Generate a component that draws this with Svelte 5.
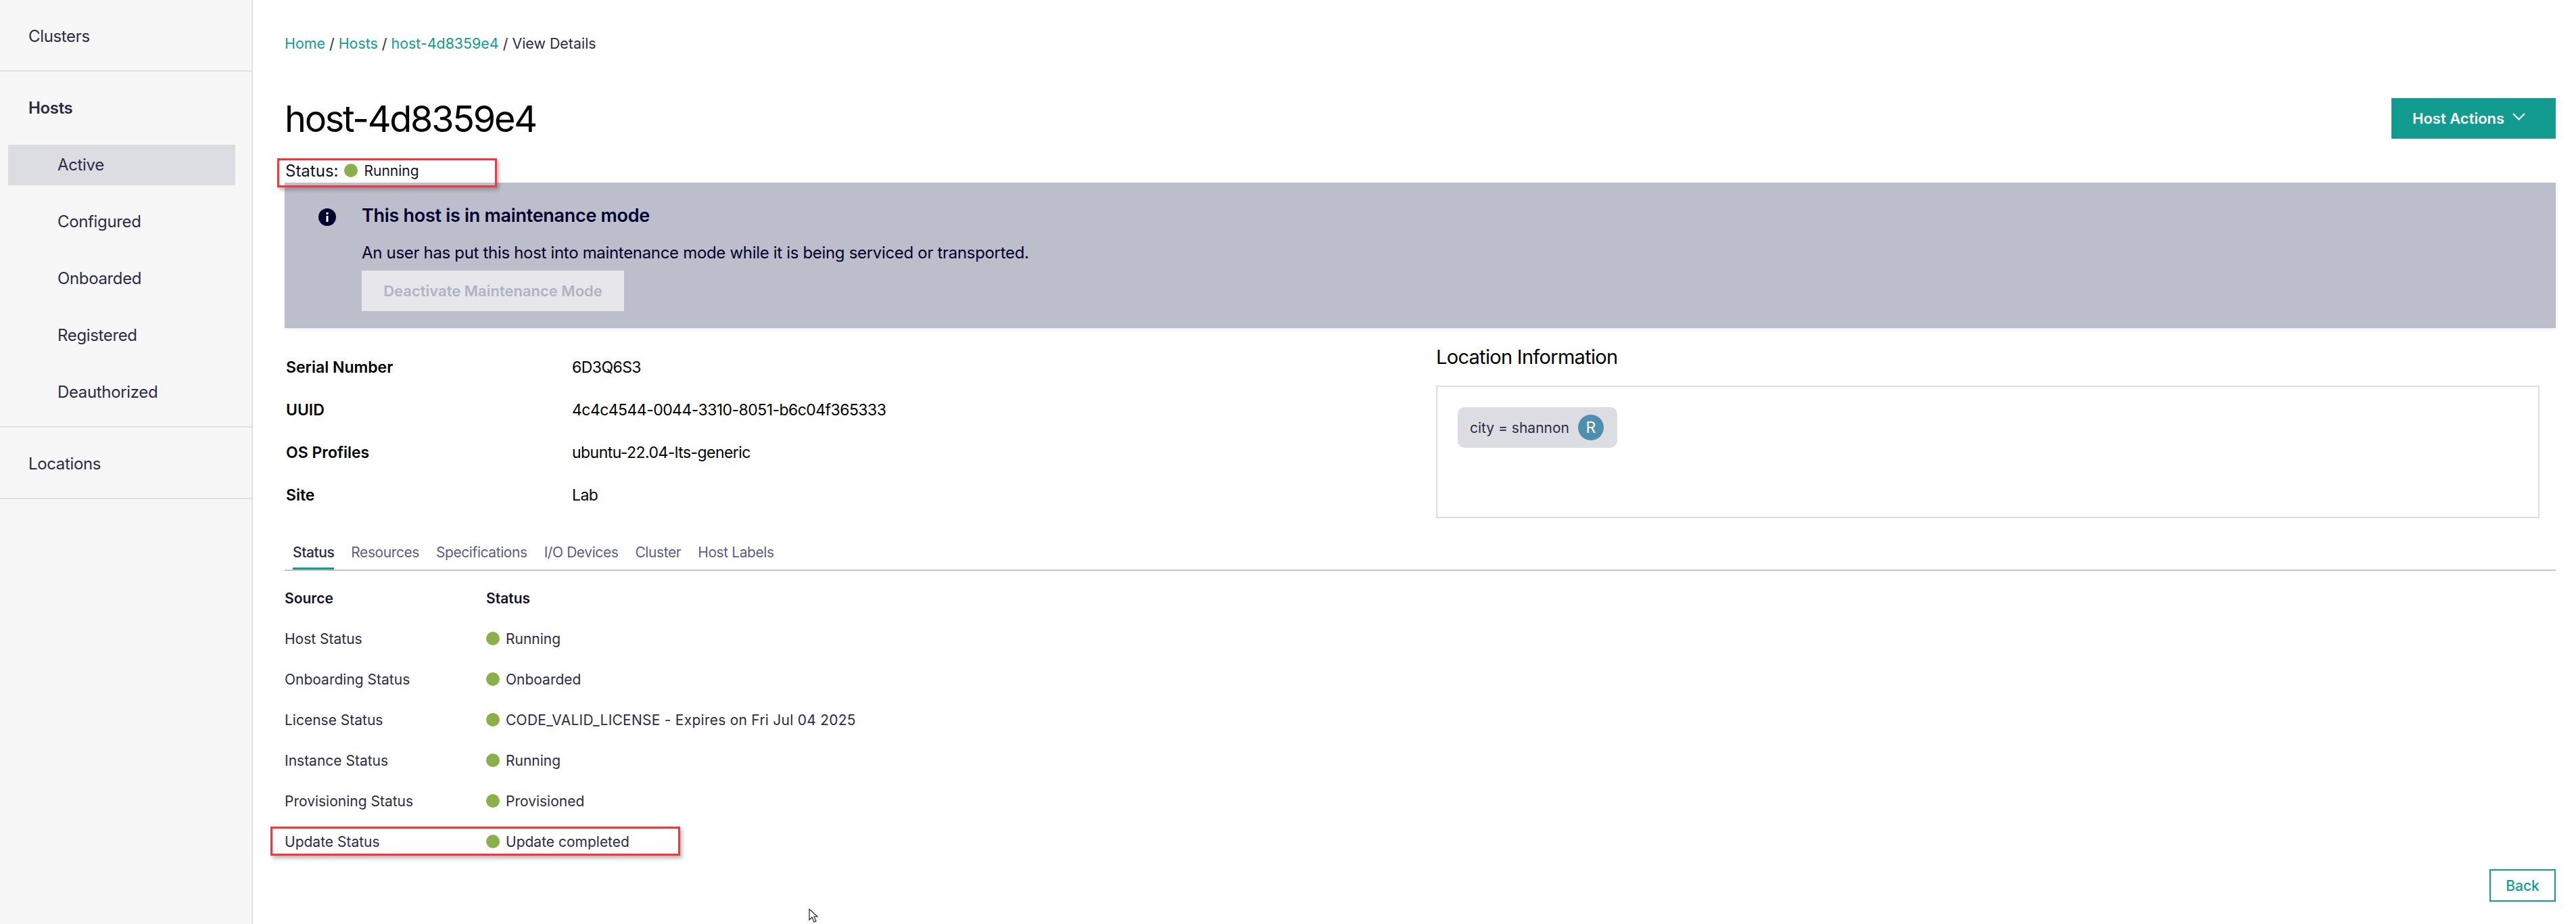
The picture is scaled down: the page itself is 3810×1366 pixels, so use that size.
<script>
  const subItems = ['Active', 'Configured', 'Onboarded', 'Registered', 'Deauthorized'];

  const details = [
    ['Serial Number', '6D3Q6S3'],
    ['UUID', '4c4c4544-0044-3310-8051-b6c04f365333'],
    ['OS Profiles', 'ubuntu-22.04-lts-generic'],
    ['Site', 'Lab']
  ];

  const tabs = ['Status', 'Resources', 'Specifications', 'I/O Devices', 'Cluster', 'Host Labels'];

  const statuses = [
    ['Host Status', 'Running'],
    ['Onboarding Status', 'Onboarded'],
    ['License Status', 'CODE_VALID_LICENSE - Expires on Fri Jul 04 2025'],
    ['Instance Status', 'Running'],
    ['Provisioning Status', 'Provisioned'],
    ['Update Status', 'Update completed']
  ];
</script>

<div class="page">
  <nav class="sidebar">
    <div class="nav-group top">
      <span class="nav-link">Clusters</span>
    </div>
    <div class="nav-group hosts">
      <span class="nav-link strong">Hosts</span>
      <ul>
        {#each subItems as item, i}
          <li class:active={i === 0}>{item}</li>
        {/each}
      </ul>
    </div>
    <div class="nav-group top">
      <span class="nav-link">Locations</span>
    </div>
  </nav>

  <main class="content">
    <div class="breadcrumb">
      <a href="#home">Home</a> / <a href="#hosts">Hosts</a> / <a href="#host">host-4d8359e4</a> / <span>View Details</span>
    </div>

    <div class="title-row">
      <h1>host-4d8359e4</h1>
      <button class="primary">
        Host Actions
        <svg width="19" height="11" viewBox="0 0 19 11" fill="none" stroke="currentColor" stroke-width="2"><path d="M1 1l8.500 8.500L18 1" /></svg>
      </button>
    </div>

    <div class="status-row">
      <span class="status-label">Status:</span>
      <i class="dot"></i>
      <span class="status-value">Running</span>
      <div class="callout head-callout"></div>
    </div>

    <section class="banner">
      <svg class="info" width="26" height="26" viewBox="0 0 26 26">
        <circle cx="13" cy="13" r="13" fill="#00002e" />
        <rect x="11.5" y="11" width="3" height="9" fill="#fff" />
        <rect x="11.5" y="6" width="3" height="3" fill="#fff" />
      </svg>
      <div class="banner-body">
        <h2>This host is in maintenance mode</h2>
        <p>An user has put this host into maintenance mode while it is being serviced or transported.</p>
        <button class="disabled" disabled>Deactivate Maintenance Mode</button>
      </div>
    </section>

    <div class="info-grid">
      <dl>
        {#each details as [label, value]}
          <dt>{label}</dt>
          <dd>{value}</dd>
        {/each}
      </dl>
      <div class="location">
        <h3>Location Information</h3>
        <div class="location-box">
          <div class="chip">
            <span>city = shannon</span>
            <b>R</b>
          </div>
        </div>
      </div>
    </div>

    <div class="tabs">
      {#each tabs as tab, i}
        <span class="tab" class:selected={i === 0}>{tab}</span>
      {/each}
    </div>

    <div class="status-table">
      <div class="row header">
        <span>Source</span>
        <span>Status</span>
      </div>
      {#each statuses as [source, status], i}
        <div class="row">
          <span>{source}</span>
          <span class="cell" class:long={status.length > 20}><i class="dot"></i>{status}</span>
          {#if i === statuses.length - 1}
            <div class="callout row-callout"></div>
          {/if}
        </div>
      {/each}
    </div>

    <div class="footer">
      <button class="outline">Back</button>
    </div>
  </main>

  <svg class="cursor" width="14" height="22" viewBox="0 0 14 22">
    <path d="M1 1v16l4-4 3 7 3-1-3-7h5z" fill="#fff" stroke="#222" stroke-width="1.2" />
  </svg>
</div>

<style>
  :global(body) {
    margin: 0;
    background: #fff;
  }

  .page {
    position: relative;
    display: flex;
    width: 3810px;
    height: 1366px;
    overflow: hidden;
    font-family: Inter, "Liberation Sans", sans-serif;
    color: #000;
  }

  /* SIDEBAR */

  .sidebar {
    width: 372px;
    flex-shrink: 0;
    background: #f7f7f8;
    border-right: 2px solid #dfdfe6;
    color: #2b2c47;
    font-size: 24px;
    letter-spacing: -0.35px;
  }

  .nav-group {
    border-bottom: 2px solid #e2e2e6;
    box-sizing: border-box;
  }

  .nav-group.top {
    height: 106px;
    display: flex;
    align-items: center;
    padding-left: 42px;
  }

  .hosts {
    padding-top: 36px;
    height: 526px;
  }

  .nav-link {
    display: block;
    padding-top: 2px;
  }

  .nav-link.strong {
    padding-left: 42px;
    padding-top: 0;
    height: 36px;
    line-height: 36px;
    font-weight: 600;
  }

  ul {
    list-style: none;
    margin: 36px 0 0 12px;
    padding: 0;
    width: 336px;
    display: flex;
    flex-direction: column;
    gap: 24px;
  }

  li {
    height: 60px;
    line-height: 60px;
    padding-left: 73px;
  }

  li.active {
    background: #dcdde3;
  }

  /* MAIN */

  .content {
    flex: 1;
    min-width: 0;
    box-sizing: border-box;
    padding: 50px 30px 0 47px;
  }

  .breadcrumb {
    height: 28px;
    line-height: 28px;
    font-size: 21.4px;
    color: #2b2c47;
  }

  .breadcrumb a {
    color: #119c8f;
    text-decoration: none;
  }

  .title-row {
    display: flex;
    align-items: center;
    justify-content: space-between;
    height: 60px;
    margin-top: 67px;
  }

  h1 {
    margin: 0;
    font-size: 54px;
    font-weight: 400;
    letter-spacing: -2.3px;
  }

  button {
    font-family: inherit;
    border: 0;
    cursor: pointer;
  }

  .primary {
    width: 243px;
    height: 60px;
    box-sizing: border-box;
    padding: 0 0 0 31px;
    background: #119c8f;
    color: #fff;
    font-size: 22px;
    font-weight: 600;
    display: flex;
    align-items: center;
    gap: 12px;
  }

  .primary svg {
    margin-top: -5px;
  }

  .status-row {
    position: relative;
    display: flex;
    align-items: center;
    height: 32px;
    margin-top: 31px;
  }

  .status-label {
    font-size: 24px;
    margin-left: 1px;
    margin-right: 9px;
    color: #11112e;
  }

  .status-value {
    font-size: 21px;
    color: #11112e;
  }

  .dot {
    display: inline-block;
    width: 20px;
    height: 20px;
    border-radius: 50%;
    background: #8bb04a;
    margin-right: 9px;
    flex-shrink: 0;
  }

  .callout {
    position: absolute;
    border: 3px solid #f0383f;
    box-shadow: 3px 4px 5px rgba(60, 60, 70, 0.35);
    z-index: 2;
    box-sizing: border-box;
  }

  .head-callout {
    left: -11px;
    top: -2px;
    width: 325px;
    height: 43px;
  }

  .banner {
    display: flex;
    height: 215px;
    margin-top: 2px;
    background: #bcbecb;
    box-sizing: border-box;
    padding: 34px 0 0 50px;
    box-shadow: 0 2px 4px rgba(0, 0, 0, 0.08);
  }

  .info {
    margin-top: 4px;
    margin-right: 38px;
  }

  h2 {
    margin: 0;
    font-size: 27px;
    line-height: 30px;
    font-weight: 600;
    letter-spacing: -0.3px;
    color: #00002e;
  }

  .banner p {
    margin: 25px 0 0;
    font-size: 24px;
    line-height: 30px;
    letter-spacing: -0.32px;
    color: #00002e;
  }

  .disabled {
    display: block;
    width: 388px;
    height: 60px;
    margin-top: 11px;
    background: #e6e6eb;
    color: #b1b3c2;
    font-size: 22px;
    font-weight: 600;
    padding: 0;
  }

  .info-grid {
    display: flex;
    justify-content: space-between;
    margin-top: 29px;
    height: 284px;
  }

  dl {
    display: grid;
    grid-template-columns: 423px 1fr;
    grid-auto-rows: 63px;
    align-items: center;
    margin: -3px 0 0 2px;
    align-self: flex-start;
    font-size: 23px;
  }

  dt {
    font-weight: 600;
  }

  dd {
    margin: 0;
    letter-spacing: -0.55px;
  }

  .location {
    width: 1632px;
    margin-right: 24px;
  }

  h3 {
    margin: 0;
    font-size: 29px;
    font-weight: 400;
    line-height: 36px;
    letter-spacing: -0.7px;
    margin-top: -4px;
  }

  .location-box {
    box-sizing: border-box;
    height: 196px;
    margin-top: 24px;
    border: 2px solid #dcdce3;
    padding: 30px;
  }

  .chip {
    display: inline-flex;
    align-items: center;
    height: 60px;
    width: 236px;
    box-sizing: border-box;
    background: #dcdde2;
    border-radius: 10px;
    padding: 0 20px 0 18px;
    justify-content: space-between;
    font-size: 21px;
    color: #2b2c47;
  }

  .chip b {
    width: 38px;
    height: 38px;
    border-radius: 50%;
    background: #4f8fae;
    color: #fff;
    font-weight: 400;
    font-size: 23px;
    display: flex;
    align-items: center;
    justify-content: center;
  }

  .tabs {
    display: flex;
    gap: 25px;
    height: 44px;
    padding-left: 12px;
    border-bottom: 2px solid #c3c4cf;
    margin-top: 0;
  }

  .tab {
    height: 44px;
    line-height: 38px;
    box-sizing: border-box;
    font-size: 21px;
    letter-spacing: -0.42px;
    color: #5c5e82;
  }

  .tab.selected {
    color: #2b2c47;
    font-weight: 500;
    border-bottom: 3px solid #119c8f;
  }

  .status-table {
    margin-top: 10px;
  }

  .row {
    position: relative;
    display: grid;
    grid-template-columns: 298px 1fr;
    align-items: center;
    height: 60px;
    font-size: 21px;
    color: #2b2c47;
  }

  .row.header {
    font-weight: 600;
    color: #11112e;
  }

  .cell {
    display: flex;
    align-items: center;
  }

  .cell.long {
    letter-spacing: 0.25px;
  }

  .row-callout {
    left: -21px;
    top: 8px;
    width: 606px;
    height: 43px;
  }

  .footer {
    display: flex;
    justify-content: flex-end;
    margin-top: 11px;
  }

  .outline {
    width: 98px;
    height: 48px;
    background: #fff;
    border: 2px solid #119c8f;
    color: #119c8f;
    font-size: 21px;
    font-weight: 500;
  }

  .cursor {
    position: absolute;
    left: 1196px;
    top: 1343px;
  }
</style>
